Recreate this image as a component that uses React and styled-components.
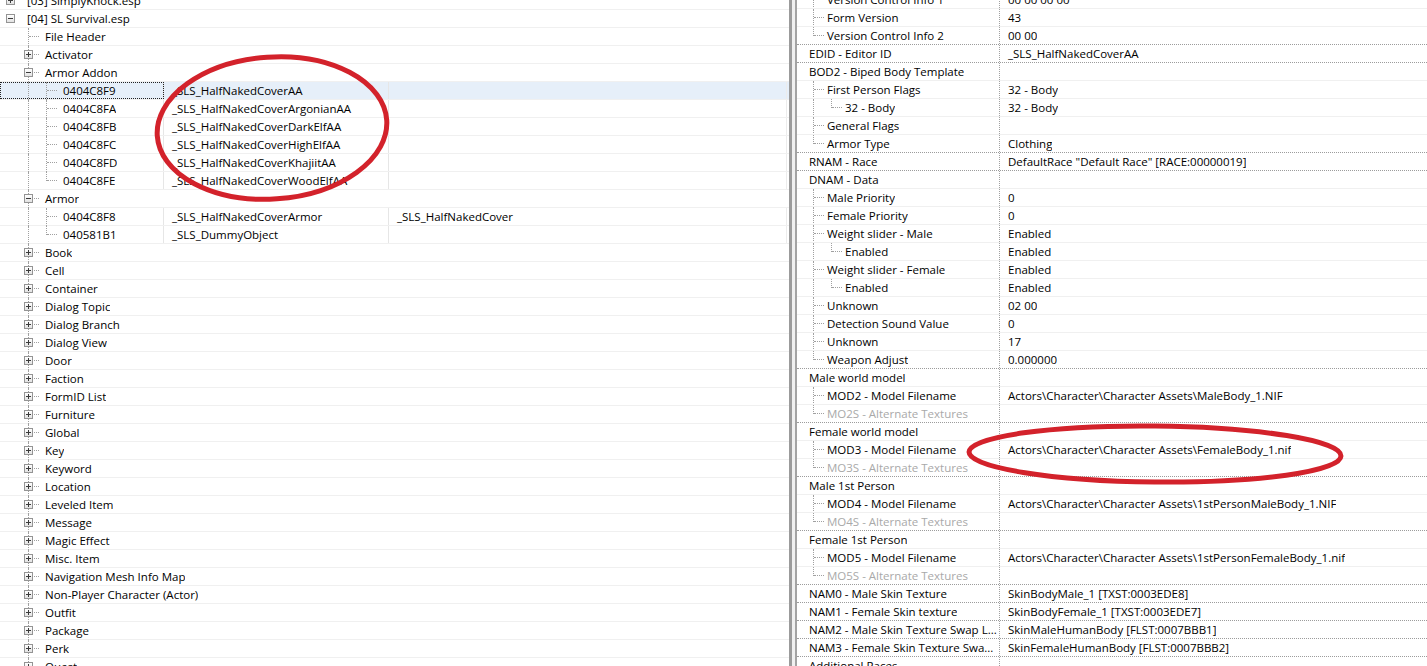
import React from "react";
import styled, { createGlobalStyle } from "styled-components";

const GlobalStyle = createGlobalStyle`
  html, body {
    margin: 0;
    padding: 0;
    background: #fff;
  }
  body {
    font-family: "Open Sans", "Noto Sans", sans-serif;
    font-size: 11.5px;
    color: #000;
    overflow: hidden;
  }
`;

const groups = [
  "Book",
  "Cell",
  "Container",
  "Dialog Topic",
  "Dialog Branch",
  "Dialog View",
  "Door",
  "Faction",
  "FormID List",
  "Furniture",
  "Global",
  "Key",
  "Keyword",
  "Location",
  "Leveled Item",
  "Message",
  "Magic Effect",
  "Misc. Item",
  "Navigation Mesh Info Map",
  "Non-Player Character (Actor)",
  "Outfit",
  "Package",
  "Perk",
  "Quest",
];

// slot tokens: first char = line (n none, | pass, t tee, l end), second = box (+ / -)
const navRows = [
  { slots: ["n+"], label: "[03] SimplyKnock.esp" },
  { slots: ["n-"], label: "[04] SL Survival.esp" },
  { slots: ["n", "t"], label: "File Header" },
  { slots: ["n", "t+"], label: "Activator" },
  { slots: ["n", "t-"], label: "Armor Addon" },
  { slots: ["n", "|", "t"], id: "0404C8F9", edid: "_SLS_HalfNakedCoverAA", selected: true },
  { slots: ["n", "|", "t"], id: "0404C8FA", edid: "_SLS_HalfNakedCoverArgonianAA" },
  { slots: ["n", "|", "t"], id: "0404C8FB", edid: "_SLS_HalfNakedCoverDarkElfAA" },
  { slots: ["n", "|", "t"], id: "0404C8FC", edid: "_SLS_HalfNakedCoverHighElfAA" },
  { slots: ["n", "|", "t"], id: "0404C8FD", edid: "_SLS_HalfNakedCoverKhajiitAA" },
  { slots: ["n", "|", "l"], id: "0404C8FE", edid: "_SLS_HalfNakedCoverWoodElfAA" },
  { slots: ["n", "t-"], label: "Armor" },
  { slots: ["n", "|", "t"], id: "0404C8F8", edid: "_SLS_HalfNakedCoverArmor", name: "_SLS_HalfNakedCover" },
  { slots: ["n", "|", "l"], id: "040581B1", edid: "_SLS_DummyObject" },
  ...groups.map((g) => ({ slots: ["n", "t+"], label: g })),
];

const ASSETS = "Actors\\Character\\Character Assets\\";

const fields = [
  { slots: ["t"], name: "Version Control Info 1", value: "00 00 00 00" },
  { slots: ["t"], name: "Form Version", value: "43" },
  { slots: ["l"], name: "Version Control Info 2", value: "00 00" },
  { slots: [], name: "EDID - Editor ID", value: "_SLS_HalfNakedCoverAA" },
  { slots: [], name: "BOD2 - Biped Body Template" },
  { slots: ["t"], name: "First Person Flags", value: "32 - Body" },
  { slots: ["|", "l"], name: "32 - Body", value: "32 - Body" },
  { slots: ["t"], name: "General Flags" },
  { slots: ["l"], name: "Armor Type", value: "Clothing" },
  { slots: [], name: "RNAM - Race", value: 'DefaultRace "Default Race" [RACE:00000019]' },
  { slots: [], name: "DNAM - Data" },
  { slots: ["t"], name: "Male Priority", value: "0" },
  { slots: ["t"], name: "Female Priority", value: "0" },
  { slots: ["t"], name: "Weight slider - Male", value: "Enabled" },
  { slots: ["|", "l"], name: "Enabled", value: "Enabled" },
  { slots: ["t"], name: "Weight slider - Female", value: "Enabled" },
  { slots: ["|", "l"], name: "Enabled", value: "Enabled" },
  { slots: ["t"], name: "Unknown", value: "02 00" },
  { slots: ["t"], name: "Detection Sound Value", value: "0" },
  { slots: ["t"], name: "Unknown", value: "17" },
  { slots: ["l"], name: "Weapon Adjust", value: "0.000000" },
  { slots: [], name: "Male world model" },
  { slots: ["t"], name: "MOD2 - Model Filename", value: ASSETS + "MaleBody_1.NIF" },
  { slots: ["l"], name: "MO2S - Alternate Textures", dim: true },
  { slots: [], name: "Female world model" },
  { slots: ["t"], name: "MOD3 - Model Filename", value: ASSETS + "FemaleBody_1.nif" },
  { slots: ["l"], name: "MO3S - Alternate Textures", dim: true },
  { slots: [], name: "Male 1st Person" },
  { slots: ["t"], name: "MOD4 - Model Filename", value: ASSETS + "1stPersonMaleBody_1.NIF" },
  { slots: ["l"], name: "MO4S - Alternate Textures", dim: true },
  { slots: [], name: "Female 1st Person" },
  { slots: ["t"], name: "MOD5 - Model Filename", value: ASSETS + "1stPersonFemaleBody_1.nif" },
  { slots: ["l"], name: "MO5S - Alternate Textures", dim: true },
  { slots: [], name: "NAM0 - Male Skin Texture", value: "SkinBodyMale_1 [TXST:0003EDE8]" },
  { slots: [], name: "NAM1 - Female Skin texture", value: "SkinBodyFemale_1 [TXST:0003EDE7]" },
  { slots: [], name: "NAM2 - Male Skin Texture Swap L...", value: "SkinMaleHumanBody [FLST:0007BBB1]" },
  { slots: [], name: "NAM3 - Female Skin Texture Swa...", value: "SkinFemaleHumanBody [FLST:0007BBB2]" },
  { slots: [], name: "Additional Races" },
];

const TreeLines = ({ slots, pad, reach }) => (
  <Gutter $pad={pad}>
    {slots.map((s, i) => (
      <Slot key={i} $line={s[0]} $reach={reach}>
        {s[1] && <Expander $open={s[1] === "-"} />}
      </Slot>
    ))}
  </Gutter>
);

const App = () => {
  return (
    <>
      <GlobalStyle />
      <Window>
        <NavPane>
          <RowList $offset={-8}>
            {navRows.map((r, i) =>
              r.id ? (
                <NavRow key={i} $selected={r.selected}>
                  <IdCell $focused={r.selected}>
                    <TreeLines slots={r.slots} pad={1} reach={10} />
                    <Label $gap={8}>{r.id}</Label>
                  </IdCell>
                  <Cell $width={225}>{r.edid}</Cell>
                  <Cell $width={398} $last>
                    {r.name}
                  </Cell>
                </NavRow>
              ) : (
                <NavRow key={i}>
                  <TreeLines slots={r.slots} pad={1} reach={10} />
                  <Label $gap={8}>{r.label}</Label>
                </NavRow>
              )
            )}
          </RowList>
        </NavPane>
        <Splitter />
        <RecordPane>
          <RowList $offset={-10}>
            {fields.map((f, i) => (
              <FieldRow key={i} $top={f.slots.length === 0}>
                <NameCell>
                  <TreeLines slots={f.slots} pad={7} reach={10} />
                  <Label $gap={5} $dim={f.dim}>
                    {f.name}
                  </Label>
                </NameCell>
                <ValueCell>{f.value}</ValueCell>
              </FieldRow>
            ))}
          </RowList>
        </RecordPane>
        <Markup viewBox="0 0 1427 666">
          <ellipse cx="272" cy="128" rx="115" ry="71" transform="rotate(-4 272 128)" />
          <ellipse cx="1155" cy="454" rx="186" ry="28" transform="rotate(0.6 1155 454)" />
        </Markup>
      </Window>
    </>
  );
};

const Window = styled.div`
  position: relative;
  display: flex;
  width: 1427px;
  height: 666px;
  overflow: hidden;
  background: #fff;
`;

const NavPane = styled.div`
  width: 789px;
  flex: none;
  overflow: hidden;
`;

const Splitter = styled.div`
  width: 8px;
  flex: none;
  box-sizing: border-box;
  background: #f0f0f0;
  border-left: 3px solid #9b9b9b;
  border-right: 2px solid #a3a3a3;
`;

const RecordPane = styled.div`
  flex: 1;
  overflow: hidden;
`;

const RowList = styled.div`
  margin-top: ${({ $offset }) => $offset}px;
`;

const NavRow = styled.div`
  display: flex;
  height: 18px;
  box-sizing: border-box;
  border-bottom: 1px solid #f0f0f0;
  background: ${({ $selected }) => ($selected ? "#e6eff9" : "transparent")};
  white-space: nowrap;
`;

const Gutter = styled.div`
  display: flex;
  flex: none;
  height: 100%;
  padding-left: ${({ $pad }) => $pad}px;
`;

const Slot = styled.span`
  position: relative;
  flex: none;
  width: 18px;
  height: 100%;

  &::before {
    content: "";
    display: ${({ $line }) => ($line === "n" ? "none" : "block")};
    position: absolute;
    left: 9px;
    top: 0;
    height: ${({ $line }) => ($line === "l" ? "9px" : "18px")};
    border-left: 1px dotted #a0a0a0;
  }

  &::after {
    content: "";
    display: ${({ $line }) => ($line === "t" || $line === "l" ? "block" : "none")};
    position: absolute;
    left: 10px;
    top: 8px;
    width: ${({ $reach }) => $reach}px;
    border-top: 1px dotted #a0a0a0;
  }
`;

const Expander = styled.span`
  position: absolute;
  z-index: 1;
  left: 5px;
  top: 4px;
  width: 9px;
  height: 9px;
  box-sizing: border-box;
  border: 1px solid #949494;
  background: linear-gradient(#ffffff, #e2e2e2);

  &::before {
    content: "";
    position: absolute;
    left: 1px;
    top: 3px;
    width: 5px;
    height: 1px;
    background: #3b3b3b;
  }

  &::after {
    content: "";
    display: ${({ $open }) => ($open ? "none" : "block")};
    position: absolute;
    left: 3px;
    top: 1px;
    width: 1px;
    height: 5px;
    background: #3b3b3b;
  }
`;

const Label = styled.span`
  padding-left: ${({ $gap }) => $gap}px;
  line-height: 17px;
  color: ${({ $dim }) => ($dim ? "#a9a9a9" : "#000")};
  overflow: hidden;
  white-space: nowrap;
`;

const IdCell = styled.div`
  display: flex;
  width: 164px;
  flex: none;
  box-sizing: border-box;
  border-right: 1px solid #e6e6e6;
  outline: ${({ $focused }) => ($focused ? "1px dotted #222" : "none")};
  outline-offset: -1px;
`;

const Cell = styled.div`
  width: ${({ $width }) => $width}px;
  flex: none;
  box-sizing: border-box;
  padding-left: 8px;
  line-height: 17px;
  border-right: 1px solid ${({ $last }) => ($last ? "#ececec" : "#e6e6e6")};
  overflow: hidden;
`;

const FieldRow = styled.div`
  display: flex;
  height: 18px;
  box-sizing: border-box;
  border-top: 1px ${({ $top }) => ($top ? "dotted #9c9c9c" : "solid #f0f0f0")};
  white-space: nowrap;
`;

const NameCell = styled.div`
  display: flex;
  width: 203px;
  flex: none;
  box-sizing: border-box;
  border-right: 1px dotted #a0a0a0;
  overflow: hidden;
`;

const ValueCell = styled.div`
  padding-left: 8px;
  line-height: 17px;
  overflow: hidden;
`;

const Markup = styled.svg`
  position: absolute;
  inset: 0;
  width: 1427px;
  height: 666px;
  pointer-events: none;
  fill: none;
  stroke: #d3222b;
  stroke-width: 5;
`;

export default App;
